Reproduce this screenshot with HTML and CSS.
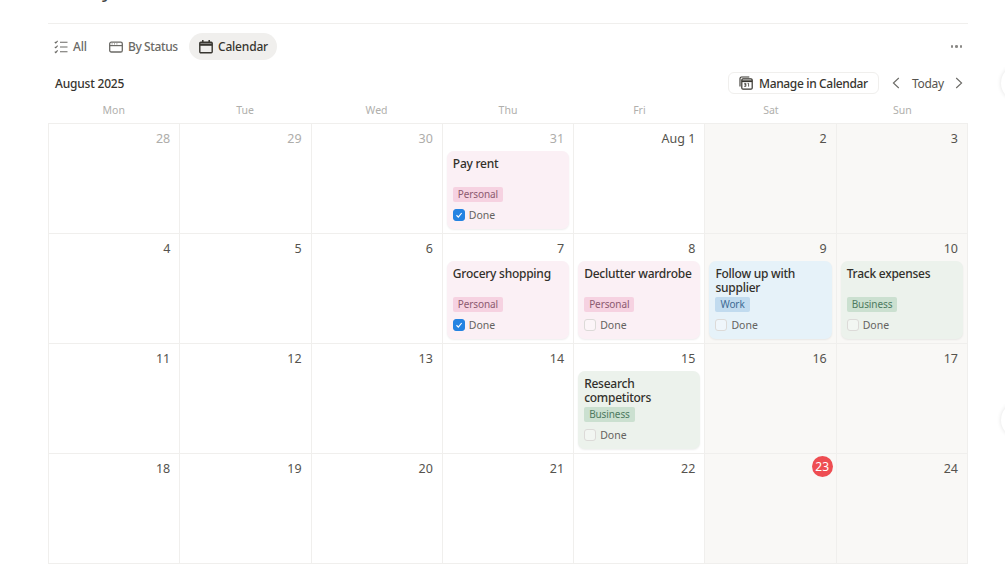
FILE: index.html
```html
<!DOCTYPE html>
<html lang="en">
<head>
<meta charset="utf-8">
<title>August 2025 Calendar</title>
<link rel="stylesheet" href="styles.css">
</head>
<body>
<span class="edge-btn edge-btn-top"></span>
<span class="edge-btn edge-btn-low"></span>
<main class="page">
  <div class="title-bar"><span class="title-tail">y</span></div>
  <nav class="tabs">
    <a class="tab tab-all">
      <svg class="ico" viewBox="0 0 14 14" fill="none" stroke="currentColor" stroke-width="1.1"><path d="M.8 2 1.8 3 3.6.8M.8 6.8l1 1 1.8-2.2M.8 11.6l1 1 1.8-2.2M6 2.2h7.5M6 7h7.5M6 11.8h7.5"/></svg>
      All
    </a>
    <a class="tab tab-status">
      <svg class="ico" viewBox="0 0 14 14" fill="none" stroke="currentColor" stroke-width="1.3"><rect x=".7" y="2.2" width="12.6" height="9.8" rx="1.6"/><path d="M.7 5.6h12.6" stroke-width="1.2"/><path d="M2.6 3.9h1M5 3.9h1M7.4 3.9h1" stroke-width=".9"/></svg>
      By Status
    </a>
    <a class="tab tab-active">
      <svg class="ico" viewBox="0 0 14 14" fill="none" stroke="currentColor" stroke-width="1.4"><rect x=".8" y="2.2" width="12.4" height="10.6" rx="1"/><path d="M.8 4.6h12.4" stroke-width="2.4"/><path d="M3.8 0v2.4M10.2 0v2.4" stroke-width="1.5"/></svg>
      Calendar
    </a>
    <span class="more"><i></i><i></i><i></i></span>
  </nav>
  <header class="month-bar">
    <h2 class="month">August 2025</h2>
    <button class="manage">
      <svg class="ico" viewBox="0 0 14 14" fill="none" stroke="currentColor"><path d="M1 10.5V2.6C1 1.7 1.6 1 2.5 1h7.8" stroke-width="1.1"/><rect x="2.8" y="2.8" width="10.4" height="10.4" rx="1.2" stroke-width="1.2"/><path d="M2.8 5.2h10.4" stroke-width="1.8"/><path d="M5.2 7.4h1.7v1.4H5.6h1.3v1.6H5.2M8.6 7.4h1v3.2" stroke-width=".8"/></svg>
      Manage in Calendar
    </button>
    <svg class="chev chev-prev" viewBox="0 0 8 12" fill="none" stroke="currentColor" stroke-width="1.1"><path d="M6.8 1 1.4 6l5.4 5"/></svg>
    <span class="today">Today</span>
    <svg class="chev" viewBox="0 0 8 12" fill="none" stroke="currentColor" stroke-width="1.1"><path d="M1.2 1l5.4 5-5.4 5"/></svg>
  </header>
  <div class="weekdays">
    <span>Mon</span><span>Tue</span><span>Wed</span><span>Thu</span><span>Fri</span><span>Sat</span><span>Sun</span>
  </div>
  <section class="grid">
    <div class="cell"><span class="day muted">28</span></div>
    <div class="cell"><span class="day muted">29</span></div>
    <div class="cell"><span class="day muted">30</span></div>
    <div class="cell">
      <span class="day muted">31</span>
      <article class="card pink">
        <h3>Pay rent</h3>
        <span class="tag">Personal</span>
        <label class="done"><span class="box checked"><svg viewBox="0 0 12 12" fill="none" stroke="#fff" stroke-width="1.4"><path d="M3 6.3 5.2 8.6 9.2 3.6"/></svg></span>Done</label>
      </article>
    </div>
    <div class="cell"><span class="day">Aug 1</span></div>
    <div class="cell weekend"><span class="day">2</span></div>
    <div class="cell weekend"><span class="day">3</span></div>

    <div class="cell"><span class="day">4</span></div>
    <div class="cell"><span class="day">5</span></div>
    <div class="cell"><span class="day">6</span></div>
    <div class="cell">
      <span class="day">7</span>
      <article class="card pink">
        <h3>Grocery shopping</h3>
        <span class="tag">Personal</span>
        <label class="done"><span class="box checked"><svg viewBox="0 0 12 12" fill="none" stroke="#fff" stroke-width="1.4"><path d="M3 6.3 5.2 8.6 9.2 3.6"/></svg></span>Done</label>
      </article>
    </div>
    <div class="cell">
      <span class="day">8</span>
      <article class="card pink">
        <h3>Declutter wardrobe</h3>
        <span class="tag">Personal</span>
        <label class="done"><span class="box"></span>Done</label>
      </article>
    </div>
    <div class="cell weekend">
      <span class="day">9</span>
      <article class="card blue">
        <h3>Follow up with supplier</h3>
        <span class="tag">Work</span>
        <label class="done"><span class="box"></span>Done</label>
      </article>
    </div>
    <div class="cell weekend">
      <span class="day">10</span>
      <article class="card green">
        <h3>Track expenses</h3>
        <span class="tag">Business</span>
        <label class="done"><span class="box"></span>Done</label>
      </article>
    </div>

    <div class="cell"><span class="day">11</span></div>
    <div class="cell"><span class="day">12</span></div>
    <div class="cell"><span class="day">13</span></div>
    <div class="cell"><span class="day">14</span></div>
    <div class="cell">
      <span class="day">15</span>
      <article class="card green">
        <h3>Research competitors</h3>
        <span class="tag">Business</span>
        <label class="done"><span class="box"></span>Done</label>
      </article>
    </div>
    <div class="cell weekend"><span class="day">16</span></div>
    <div class="cell weekend"><span class="day">17</span></div>

    <div class="cell"><span class="day">18</span></div>
    <div class="cell"><span class="day">19</span></div>
    <div class="cell"><span class="day">20</span></div>
    <div class="cell"><span class="day">21</span></div>
    <div class="cell"><span class="day">22</span></div>
    <div class="cell weekend"><span class="day current">23</span></div>
    <div class="cell weekend"><span class="day">24</span></div>
  </section>
</main>
</body>
</html>
```
FILE: styles.css
```css
* { box-sizing: border-box; }
html, body { height: 100%; }
body {
  margin: 0;
  background: #fff;
  color: #37352f;
  font-family: "Noto Sans", "Open Sans", "Liberation Sans", sans-serif;
  overflow: hidden;
  position: relative;
}
.page { width: 1005px; padding: 0 37px 0 48px; }
.title-bar {
  height: 24px;
  border-bottom: 1px solid #f0efed;
  overflow: hidden;
  padding-left: 54px;
}
.title-tail {
  display: block;
  font-size: 20px;
  line-height: 20px;
  margin-top: -20px;
  color: #444;
}
.tabs {
  display: flex;
  align-items: center;
  height: 27px;
  margin-top: 9px;
  font-size: 12px;
  letter-spacing: -.2px;
  color: #6b6a66;
}
.tab {
  display: flex;
  align-items: center;
  gap: 5px;
  height: 27px;
  font-weight: 500;
  white-space: nowrap;
}
.tab-all { padding-left: 6px; width: 61px; }
.tab-status { width: 80px; letter-spacing: -.4px; }
.tab-active {
  background: #f0efed;
  border-radius: 14px;
  padding: 0 10px;
  width: 88px;
  color: #37352f;
}
.ico { width: 14px; height: 14px; flex: none; }
.more { margin-left: auto; margin-right: 6px; display: flex; gap: 2px; }
.more i { width: 2.5px; height: 2.5px; border-radius: 50%; background: #8a8986; }
.month-bar {
  display: flex;
  align-items: center;
  height: 22px;
  margin-top: 12px;
  padding-left: 7px;
}
.month {
  margin: 0 auto 0 0;
  font-size: 12px;
  font-weight: 500;
  letter-spacing: -.2px;
  color: #37352f;
}
.manage {
  display: flex;
  align-items: center;
  gap: 6px;
  width: 151px;
  height: 22px;
  padding: 0 0 0 10px;
  background: #fff;
  border: 1px solid #f0efed;
  border-radius: 6px;
  font: 500 12px "Noto Sans", "Open Sans", sans-serif;
  letter-spacing: -.35px;
  color: #37352f;
  white-space: nowrap;
}
.chev { width: 8px; height: 12px; color: #6b6a66; flex: none; }
.chev-prev { margin-left: 13px; }
.today { width: 31px; margin: 0 12px; font-size: 12px; letter-spacing: -.3px; color: #55534e; text-align: center; white-space: nowrap; }
.month-bar > .chev:last-child { margin-right: 5px; }
.weekdays {
  display: grid;
  grid-template-columns: repeat(7, 1fr);
  height: 29px;
  align-items: center;
  padding-top: 3px;
  text-align: center;
  font-size: 10.5px;
  color: #b0afac;
}
.grid {
  display: grid;
  grid-template-columns: repeat(7, 1fr);
  grid-auto-rows: 110px;
  border-top: 1px solid #f0efed;
  border-left: 1px solid #f0efed;
}
.cell {
  display: flex;
  flex-direction: column;
  border-right: 1px solid #f0efed;
  border-bottom: 1px solid #f0efed;
  padding: 4px 4px 0;
  min-width: 0;
}
.weekend { background: #f9f8f6; }
.day {
  align-self: flex-end;
  height: 22px;
  margin-right: 5px;
  font-size: 12.5px;
  line-height: 21px;
  color: #55534e;
}
.muted { color: #aeadaa; }
.current {
  width: 21px;
  height: 21px;
  margin-top: -2px;
  margin-right: -1px;
  margin-bottom: 3px;
  border-radius: 50%;
  background: #ee4d52;
  color: #fff;
  text-align: center;
  line-height: 21px;
  font-size: 12px;
}
.card {
  display: flex;
  flex-direction: column;
  align-items: flex-start;
  height: 78px;
  margin-top: 1px;
  padding: 6px 6px 0;
  border-radius: 7px;
  box-shadow: 0 1px 2px rgba(0, 0, 0, .07);
}
.card h3 {
  margin: 0;
  height: 30px;
  font-size: 12px;
  line-height: 14px;
  font-weight: 500;
  letter-spacing: -.25px;
  color: #32302b;
}
.tag {
  padding: 0 5px;
  height: 15px;
  border-radius: 2px;
  font-size: 10px;
  letter-spacing: -.1px;
  line-height: 15px;
}
.done {
  display: flex;
  align-items: center;
  gap: 4px;
  margin-top: 7px;
  font-size: 10.5px;
  line-height: 12px;
  color: #65635f;
}
.box {
  width: 12px;
  height: 12px;
  border: 1px solid #dcdad8;
  border-radius: 3px;
  background: rgba(255, 255, 255, .35);
}
.box.checked { background: #2383e2; border-color: #2383e2; }
.box svg { display: block; width: 10px; height: 10px; }
.pink { background: #fbf0f5; }
.pink .tag { background: #f6d2e1; color: #8c5a70; }
.blue { background: #e6f2f9; }
.blue .tag { background: #c1dbef; color: #3f6b94; }
.green { background: #ecf2ec; }
.green .tag { background: #cbe0d0; color: #4d7a5f; }
.edge-btn {
  position: absolute;
  width: 36px;
  height: 36px;
  border-radius: 50%;
  left: 1001px;
  background: #fff;
  box-shadow: 0 0 4px rgba(0, 0, 0, .12);
}
.edge-btn-top { top: 65px; }
.edge-btn-low { top: 402px; }
```
